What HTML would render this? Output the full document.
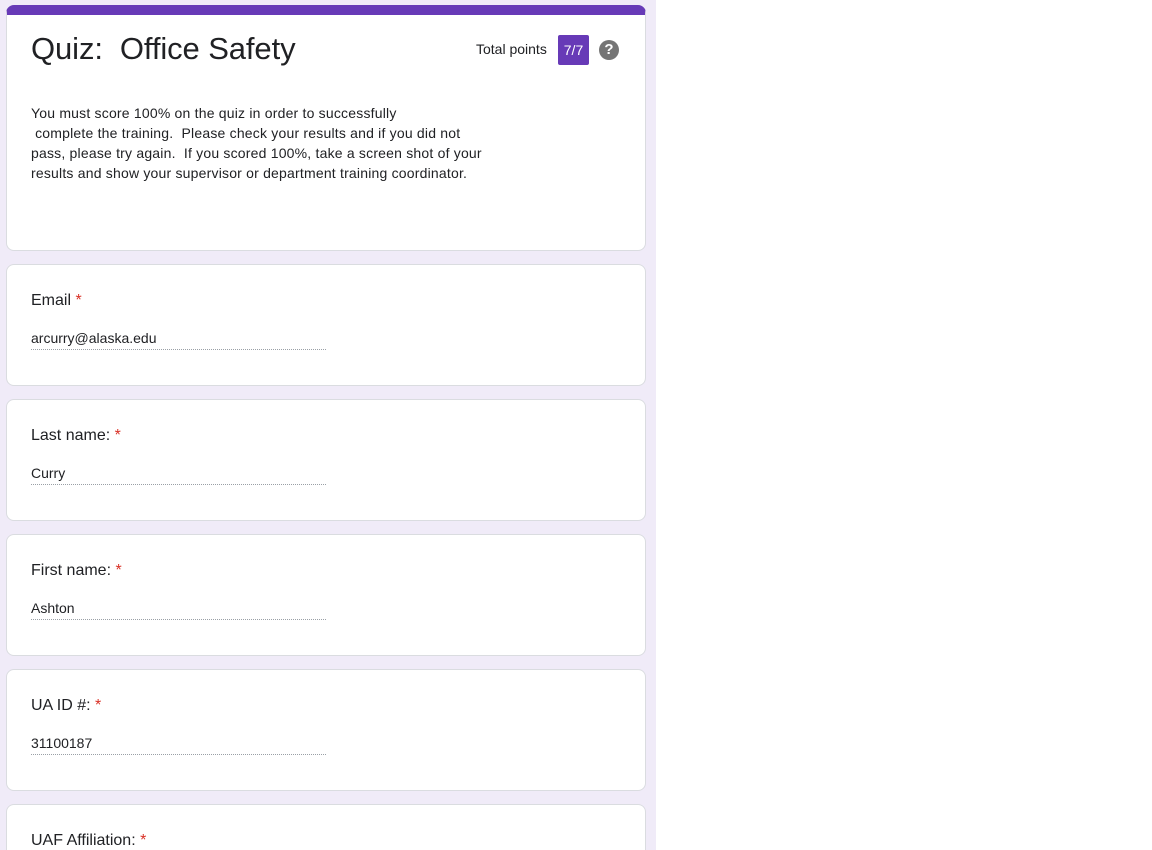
<!DOCTYPE html>
<html style="overflow:hidden;height:850px"><head><style>
body{margin:0;width:1152px;height:850px;overflow:hidden;background:#fff;font-family:"Liberation Sans",Roboto,sans-serif;color:#202124;position:relative}
.bg{position:absolute;left:0;top:0;width:656px;height:850px;background:#f0ebf8}
.card{position:absolute;left:6px;width:638px;background:#fff;border:1px solid #dadce0;border-radius:8px;box-sizing:content-box}
.top{top:5px;border-top:10px solid #673ab7;height:235px}
.q{height:120px}
.lab{position:absolute;left:24px;top:27px;font-size:16px;color:#202124}
.star{color:#d93025}
.val{position:absolute;left:24px;top:65px;width:295px;font-size:14px;border-bottom:1px dotted #9aa0a6;padding-bottom:3px;color:#202124}
</style></head><body>
<div class="bg"></div>
<div class="card top">
 <div style="position:absolute;left:24px;top:16px;font-size:31px;letter-spacing:-0.1px;color:#202124">Quiz:&nbsp; Office Safety</div>
 <div style="position:absolute;left:469px;top:26px;font-size:14px">Total points</div>
 <div style="position:absolute;left:551px;top:20px;width:31px;height:30px;background:#673ab7;border-radius:2px;color:#fff;font-size:14px;line-height:30px;text-align:center">7/7</div>
 <div style="position:absolute;left:592px;top:25px;width:20px;height:20px;border-radius:50%;background:#757575;color:#fff;font-size:15px;font-weight:bold;line-height:20px;text-align:center">?</div>
 <div style="position:absolute;left:24px;top:88px;font-size:14px;letter-spacing:0.2px;line-height:20px;white-space:pre;color:#202124">You must score 100% on the quiz in order to successfully
 complete the training.  Please check your results and if you did not
pass, please try again.  If you scored 100%, take a screen shot of your
results and show your supervisor or department training coordinator.</div>
</div>
<div class="card q" style="top:264px"><div class="lab">Email <span class="star">*</span></div><div class="val">arcurry@alaska.edu</div></div>
<div class="card q" style="top:399px"><div class="lab">Last name: <span class="star">*</span></div><div class="val">Curry</div></div>
<div class="card q" style="top:534px"><div class="lab">First name: <span class="star">*</span></div><div class="val">Ashton</div></div>
<div class="card q" style="top:669px"><div class="lab">UA ID #: <span class="star">*</span></div><div class="val">31100187</div></div>
<div class="card" style="top:804px;height:45px;border-bottom:none;border-radius:8px 8px 0 0"><div class="lab">UAF Affiliation: <span class="star">*</span></div></div>
</body></html>
